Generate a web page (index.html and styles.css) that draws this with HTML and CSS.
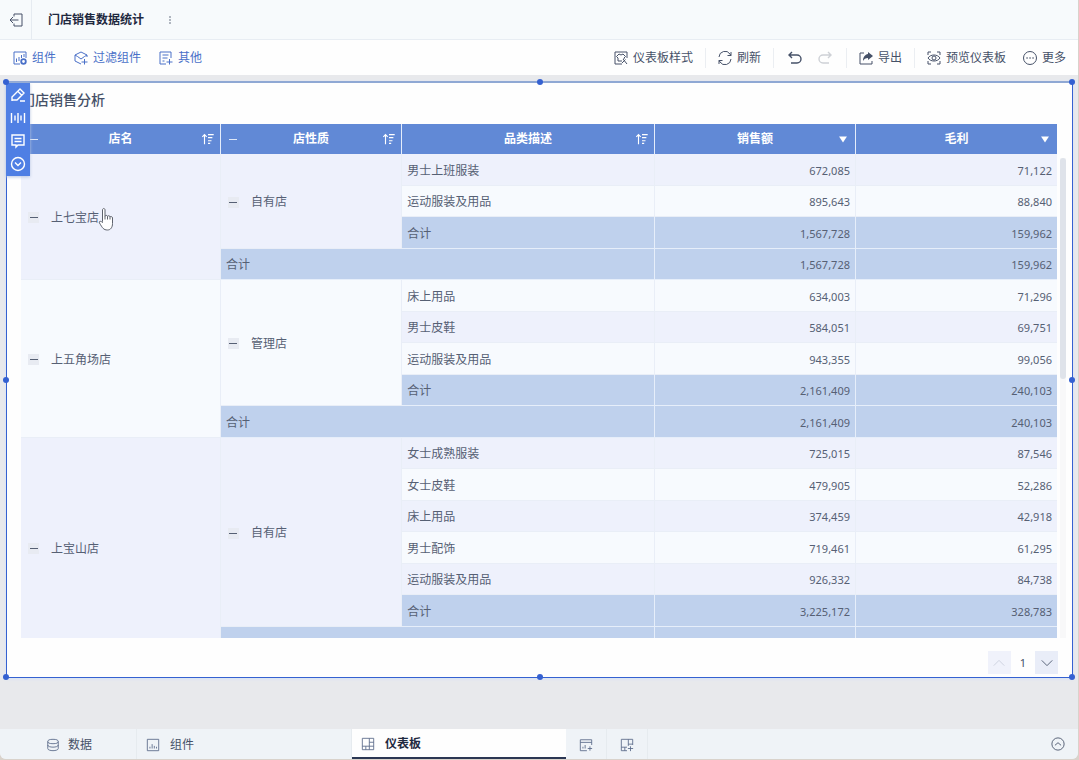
FILE: index.html
```html
<!DOCTYPE html>
<html lang="zh-CN">
<head>
    <meta charset="UTF-8">
    <meta name="viewport" content="width=device-width, initial-scale=1.0">
    <title>门店销售数据统计</title>
    <link rel="stylesheet" href="styles.css">
</head>
<body>
<div class="app">
    <header class="titlebar">
        <button class="icon-button exit-button" aria-label="退出">
            <svg class="icon" viewBox="1 1 14 14"><path d="M6 4.500V2h8v12H6v-2.500M10.500 8H2M5 5L2 8l3 3"/></svg>
        </button>
        <h1 class="page-title">门店销售数据统计</h1>
        <button class="icon-button" aria-label="更多操作">
            <svg class="icon solid" viewBox="0 0 16 16"><circle cx="8" cy="4" r="1"/><circle cx="8" cy="8" r="1"/><circle cx="8" cy="12" r="1"/></svg>
        </button>
    </header>

    <nav class="toolbar">
        <div class="tools tools-add">
            <button class="tool">
                <svg class="icon" viewBox="1 1 14 14"><path d="M8 14H2V2h12v6M4.500 12V8.500M7 11V7M9.500 8V5M12 7V4"/><circle class="thick" cx="11.500" cy="11.500" r="2.300"/></svg>
                组件
            </button>
            <button class="tool">
                <svg class="icon" viewBox="1 1 14 14"><path d="M14 7V5L8 2 2 5v6l6 3M2 5l2.500 1.500M14 5l-2.500 1.500M4.500 6.500L8 9l3.500-2.500M11.500 9v5.500M8.500 12h6"/></svg>
                过滤组件
            </button>
            <button class="tool">
                <svg class="icon" viewBox="1 1 14 14"><path d="M13 8V2H2v12h6M4.500 5h6M4.500 8h5M4.500 11h2M11.500 9v5.500M8.500 12h6"/></svg>
                其他
            </button>
        </div>
        <div class="tools tools-edit">
            <button class="tool">
                <svg class="icon" viewBox="1 1 14 14"><path d="M14 8V2H2v12h7M6 4l2 1 2-1 2.500 2.500L11 8v1M6 4L3.500 6.500 5 8v3h4M10 9l4 5M12.500 9.500L9 13"/></svg>
                仪表板样式
            </button>
            <span class="divider"></span>
            <button class="tool">
                <svg class="icon" viewBox="1 1 14 14"><path d="M2 7a6 6 0 0 1 11-3l1 1.500M14 2v3.500h-3.500M14 9a6 6 0 0 1-11 3l-1-1.500M2 14v-3.500h3.500"/></svg>
                刷新
            </button>
            <span class="divider"></span>
            <button class="icon-button" aria-label="撤销">
                <svg class="icon bold" viewBox="0 0 16 16"><path d="M5 2L2 5l3 3M2 5h8a4 4 0 0 1 0 8H4"/></svg>
            </button>
            <button class="icon-button redo" aria-label="重做" disabled>
                <svg class="icon bold" viewBox="0 0 16 16"><path d="M11 2l3 3-3 3M14 5H6a4 4 0 0 0 0 8h6"/></svg>
            </button>
            <span class="divider"></span>
            <button class="tool">
                <svg class="icon" viewBox="1 1 14 14"><path d="M6 3H2v11h12v-3"/><path class="fill" d="M10 2l5 4-5 4V8C7.500 8 6 9 5 11c0-4 2-6.500 5-7z"/></svg>
                导出
            </button>
            <span class="divider"></span>
            <button class="tool">
                <svg class="icon" viewBox="1 1 14 14"><path d="M2 5V2h3M11 2h3v3M14 11v3h-3M5 14H2v-3M2 8c2.500-4 9.500-4 12 0-2.500 4-9.500 4-12 0z"/><circle cx="8" cy="8" r="2"/></svg>
                预览仪表板
            </button>
            <button class="tool tool-more">
                <svg class="icon" viewBox="1 1 14 14"><circle cx="8" cy="8" r="6.500"/><path class="dots" d="M5 8h.1M8 8h.1M11 8h.1"/></svg>
                更多
            </button>
        </div>
    </nav>

    <main class="canvas">
        <section class="widget">
            <span class="handle top left"></span>
            <span class="handle top center"></span>
            <span class="handle top right"></span>
            <span class="handle middle left"></span>
            <span class="handle middle right"></span>
            <span class="handle bottom left"></span>
            <span class="handle bottom center"></span>
            <span class="handle bottom right"></span>

            <div class="widget-tools">
                <button aria-label="编辑"><svg class="icon" viewBox="0 0 16 16"><path d="M2 14v-4L10 2l4 4-7 7H2M8 4.500L11.500 8M10 14h5"/></svg></button>
                <button aria-label="筛选"><svg class="icon" viewBox="0 0 16 16"><path d="M1.500 3v10M14.500 3v10M5 5.500v5M8 3v10M11 5.500v5"/></svg></button>
                <button aria-label="备注"><svg class="icon" viewBox="0 0 16 16"><path d="M2 2h12v10H8l-2 2v-2H2zM4.500 5.500h7M4.500 8.500h7"/></svg></button>
                <button aria-label="展开"><svg class="icon" viewBox="0 0 16 16"><circle cx="8" cy="8" r="6.500"/><path d="M5 6.500l3 3 3-3"/></svg></button>
            </div>

            <h2 class="widget-title">门店销售分析</h2>

            <div class="table-area">
                <div class="table-clip">
                    <table class="report">
                        <colgroup>
                            <col class="col-store"><col class="col-type"><col class="col-category"><col class="col-amount"><col class="col-amount">
                        </colgroup>
                        <thead>
                        <tr>
                            <th><div class="head"><button class="fold" aria-label="折叠店名"></button><span>店名</span><button class="sort" aria-label="排序"><svg class="icon" viewBox="0 0 16 16"><path d="M4 14V3M1.500 5.500L4 3l2.500 2.500M8 3h6.500M8 6.500h5M8 10h4M8 13h2.500"/></svg></button></div></th>
                            <th><div class="head"><button class="fold" aria-label="折叠店性质"></button><span>店性质</span><button class="sort" aria-label="排序"><svg class="icon" viewBox="0 0 16 16"><path d="M4 14V3M1.500 5.500L4 3l2.500 2.500M8 3h6.500M8 6.500h5M8 10h4M8 13h2.500"/></svg></button></div></th>
                            <th><div class="head"><span>品类描述</span><button class="sort" aria-label="排序"><svg class="icon" viewBox="0 0 16 16"><path d="M4 14V3M1.500 5.500L4 3l2.500 2.500M8 3h6.500M8 6.500h5M8 10h4M8 13h2.500"/></svg></button></div></th>
                            <th><div class="head"><span>销售额</span><button class="sort" aria-label="排序"><svg class="icon solid" viewBox="0 0 16 16"><path d="M3.500 5h9L8 12z"/></svg></button></div></th>
                            <th><div class="head"><span>毛利</span><button class="sort" aria-label="排序"><svg class="icon solid" viewBox="0 0 16 16"><path d="M3.500 5h9L8 12z"/></svg></button></div></th>
                        </tr>
                        </thead>
                        <tbody>
                        <tr class="tint"><td rowspan="4" class="tint"><div class="group"><button class="fold" aria-label="折叠"></button>上七宝店</div></td><td rowspan="3" class="tint"><div class="group"><button class="fold" aria-label="折叠"></button>自有店</div></td><td>男士上班服装</td><td class="num">672,085</td><td class="num">71,122</td></tr>
                        <tr><td>运动服装及用品</td><td class="num">895,643</td><td class="num">88,840</td></tr>
                        <tr class="total"><td>合计</td><td class="num">1,567,728</td><td class="num">159,962</td></tr>
                        <tr class="total"><td colspan="2">合计</td><td class="num">1,567,728</td><td class="num">159,962</td></tr>

                        <tr><td rowspan="5"><div class="group"><button class="fold" aria-label="折叠"></button>上五角场店</div></td><td rowspan="4"><div class="group"><button class="fold" aria-label="折叠"></button>管理店</div></td><td>床上用品</td><td class="num">634,003</td><td class="num">71,296</td></tr>
                        <tr class="tint"><td>男士皮鞋</td><td class="num">584,051</td><td class="num">69,751</td></tr>
                        <tr><td>运动服装及用品</td><td class="num">943,355</td><td class="num">99,056</td></tr>
                        <tr class="total"><td>合计</td><td class="num">2,161,409</td><td class="num">240,103</td></tr>
                        <tr class="total"><td colspan="2">合计</td><td class="num">2,161,409</td><td class="num">240,103</td></tr>

                        <tr class="tint"><td rowspan="7" class="tint"><div class="group"><button class="fold" aria-label="折叠"></button>上宝山店</div></td><td rowspan="6" class="tint"><div class="group"><button class="fold" aria-label="折叠"></button>自有店</div></td><td>女士成熟服装</td><td class="num">725,015</td><td class="num">87,546</td></tr>
                        <tr><td>女士皮鞋</td><td class="num">479,905</td><td class="num">52,286</td></tr>
                        <tr class="tint"><td>床上用品</td><td class="num">374,459</td><td class="num">42,918</td></tr>
                        <tr><td>男士配饰</td><td class="num">719,461</td><td class="num">61,295</td></tr>
                        <tr class="tint"><td>运动服装及用品</td><td class="num">926,332</td><td class="num">84,738</td></tr>
                        <tr class="total"><td>合计</td><td class="num">3,225,172</td><td class="num">328,783</td></tr>
                        <tr class="total"><td colspan="2"></td><td></td><td></td></tr>
                        </tbody>
                    </table>
                </div>
                <div class="scroll-track"><div class="scroll-thumb"></div></div>
            </div>

            <div class="pager">
                <button aria-label="上一页" disabled><svg class="icon" viewBox="0 0 16 16"><path d="M2 11l6-6 6 6"/></svg></button>
                <span>1</span>
                <button aria-label="下一页"><svg class="icon" viewBox="0 0 16 16"><path d="M2 5l6 6 6-6"/></svg></button>
            </div>
        </section>

        <svg class="cursor" viewBox="0 0 16 24"><path d="M4.500 14V2.500c0-2 2.500-2 2.500 0V9c0-1.500 2.500-1.500 2.500 0 .5-1.200 2.500-1 2.500.500.500-1 2.500-.5 2.500 1V16c0 4-2 6.500-5 6.500-4 0-5-2-8-7-.8-1.700 1-2.500 3-.5zM7 9v3M9.500 9v3M12 9.500V12"/></svg>
    </main>

    <footer class="tabs">
        <button class="tab tab-data">
            <svg class="icon" viewBox="0 0 16 16"><ellipse cx="8" cy="4" rx="6" ry="2.500"/><path d="M2 4v8c0 3.300 12 3.300 12 0V4M2 8c0 3.300 12 3.300 12 0"/></svg>
            数据
        </button>
        <button class="tab tab-chart">
            <svg class="icon" viewBox="0 0 16 16"><path d="M1.500 1.500h13v13h-13zM4.500 12v-2M7 12V7M9.500 12V9M12 12v-2"/></svg>
            组件
        </button>
        <button class="tab tab-active">
            <svg class="icon" viewBox="0 0 16 16"><path d="M1.500 1.500h13v13h-13zM9.500 1.500v13M1.500 10.500h8M9.500 6h5M9.500 10.500h5M5.500 10.500v4"/></svg>
            仪表板
        </button>
        <button class="tab tab-small" aria-label="新建组件">
            <svg class="icon" viewBox="0 0 16 16"><path d="M14.500 8V2h-13v12.500H9M1.500 5h13M4.500 12v-2M7 12V8M12.500 9.500v5M10 12h5"/></svg>
        </button>
        <button class="tab tab-small" aria-label="新建仪表板">
            <svg class="icon" viewBox="0 0 16 16"><path d="M14.500 8V1.500h-13v13H8M9.500 1.500V9M1.500 10.500H8M9.500 7h5M5.500 10.500v4M12 9.500v5.500M9 12h6"/></svg>
        </button>
        <button class="icon-button collapse" aria-label="收起">
            <svg class="icon" viewBox="0 0 16 16"><circle cx="8" cy="8" r="7"/><path d="M4.500 9.500L8 6.500l3.500 3"/></svg>
        </button>
    </footer>
</div>
</body>
</html>
```

FILE: styles.css
```css
:root {
    --ink: #465168;
    --cell: #566074;
    --dark: #1f2940;
    --blue: #4a70c8;
    --select: #3561d1;
    --head: #6189d6;
    --total: #bfd1ed;
    --tint: #eef1fc;
    --plain: #f7fafe;
    --bar: #eff3f7;
}

* {
    box-sizing: border-box;
}

body {
    margin: 0;
    padding: 0 1px 1px 0;
    min-height: 100vh;
    display: flex;
    background: #d9d2cb;
    color: var(--ink);
    font-family: "Noto Sans", "Noto Sans CJK SC", sans-serif;
    font-size: 12px;
    line-height: 16px;
}

button {
    padding: 0;
    border: none;
    background: none;
    color: inherit;
    font: inherit;
    cursor: pointer;
}

h1,
h2 {
    margin: 0;
}

.icon {
    display: block;
    flex: none;
    width: 16px;
    height: 16px;
    overflow: visible;
    fill: none;
    stroke: currentColor;
    stroke-width: 1;
}

.icon.bold {
    stroke-width: 1.4;
}

.icon.solid,
.icon .fill {
    fill: currentColor;
    stroke: none;
}

.icon .thick {
    stroke-width: 1.8;
}

.icon .dots {
    stroke-width: 1.5;
    stroke-linecap: round;
}

.app {
    flex: 1;
    display: flex;
    flex-direction: column;
    background: #e8e9ec;
    border-radius: 0 0 6px 6px;
    overflow: hidden;
}

/* top bars */
.titlebar {
    display: flex;
    align-items: center;
    height: 40px;
    background: #f7fafc;
    border-bottom: 1px solid #e8edf3;
}

.icon-button {
    display: flex;
    align-items: center;
    justify-content: center;
    width: 32px;
    height: 24px;
}

.exit-button {
    height: 100%;
    border-right: 1px solid #e6ebf1;
}

.page-title {
    margin: 0 10px 0 16px;
    color: var(--dark);
    font-size: 12px;
    font-weight: 700;
}

.titlebar .solid {
    width: 12px;
}

.toolbar {
    display: flex;
    align-items: center;
    justify-content: space-between;
    height: 35px;
    padding: 0 12px 0 13px;
    background: #fefefe;
}

.tools {
    display: flex;
    align-items: center;
}

.tools-add {
    gap: 18px;
    color: var(--blue);
}

.tool {
    display: flex;
    align-items: center;
    gap: 5px;
    white-space: nowrap;
}

.tools-edit {
    gap: 12px;
}

.tools-edit .icon-button {
    width: 18px;
}

.tools-edit .redo {
    color: #ced1d6;
}

.tool-more {
    margin-left: 5px;
}

.divider {
    width: 1px;
    height: 20px;
    background: #ebeef2;
}

/* canvas */
.canvas {
    position: relative;
    flex: 1;
    padding: 6px 5px 6px 6px;
}

.widget {
    position: relative;
    padding: 8px 6px 3px 14px;
    background: #fefefe;
    border: 1px solid var(--select);
    border-top: 2px solid #8fa8d4;
    box-shadow: 0 1px 3px #d5e2f7;
}

.widget-title {
    padding-bottom: 15px;
    font-size: 14px;
    font-weight: 500;
    line-height: 18px;
}

.handle {
    position: absolute;
    z-index: 3;
    width: 6px;
    height: 6px;
    border-radius: 50%;
    background: var(--select);
}

.handle.top { top: -4px; }
.handle.middle { top: calc(50% - 3px); }
.handle.bottom { bottom: -3px; }
.handle.left { left: -4px; }
.handle.center { left: calc(50% - 3px); }
.handle.right { right: -3px; }

.widget-tools {
    position: absolute;
    z-index: 2;
    top: 0;
    left: -1px;
    display: flex;
    flex-direction: column;
    width: 24px;
    padding-bottom: 1px;
    background: #4f7fe4;
    color: #fff;
    box-shadow: 0 1px 3px #b8c6e2;
}

.widget-tools button {
    display: flex;
    align-items: center;
    justify-content: center;
    height: 23px;
}

.widget-tools .icon {
    stroke-width: 1.4;
}

/* report table */
.table-area {
    display: flex;
}

.table-clip {
    flex: 1;
    height: 514px;
    overflow: hidden;
}

.report {
    width: 100%;
    table-layout: fixed;
    border-collapse: separate;
    border-spacing: 0;
}

.col-store { width: 19.3%; }
.col-type { width: 17.5%; }
.col-category { width: 24.4%; }
.col-amount { width: 19.4%; }

.report th {
    height: 30px;
    padding: 0;
    background: var(--head);
    border-right: 1px solid #e5edfb;
    color: #fff;
    font-weight: 700;
}

.report td {
    height: 31px;
    padding: 2px 5px 0;
    background: var(--plain);
    border-right: 1px solid #e9eef7;
    border-bottom: 1px solid #e9eef7;
    color: var(--cell);
}

.report tr > :last-child {
    border-right: none;
}

.report tbody tr:nth-child(odd) td {
    height: 32px;
}

.report .tint td,
.report td.tint {
    background: var(--tint);
}

.report .total td {
    background: var(--total);
    border-color: #e6eefa;
}

.report .num {
    font-size: 11px;
    text-align: right;
}

.head {
    position: relative;
    display: flex;
    align-items: center;
    justify-content: center;
}

.head .fold,
.head .sort {
    position: absolute;
}

.head .fold {
    left: 7px;
    background: none;
    color: #dfe8f8;
}

.head .sort {
    right: 5px;
}

.head .icon {
    width: 14px;
    height: 14px;
    stroke-width: 1.3;
}

.fold {
    display: flex;
    align-items: center;
    justify-content: center;
    width: 11px;
    height: 11px;
    background: #e8ebf2;
}

.fold::before {
    content: "";
    width: 8px;
    height: 1px;
    background: currentColor;
}

.group {
    display: flex;
    align-items: center;
    gap: 12px;
    padding-left: 2px;
}

.scroll-track {
    width: 6px;
    margin: 34px 0 0 3px;
    background: #f8f8f9;
}

.scroll-thumb {
    height: 46%;
    border-radius: 3px;
    background: #dfe3ea;
}

.pager {
    display: flex;
    align-items: center;
    justify-content: flex-end;
    gap: 9px;
    padding: 13px 8px 0 0;
    font-size: 11px;
}

.pager button {
    display: flex;
    align-items: center;
    justify-content: center;
    width: 23px;
    height: 23px;
    background: #e9edf8;
}

.pager button:disabled {
    background: #f0f2fb;
    color: #c9cedb;
}

.pager .icon {
    width: 14px;
    height: 14px;
}

.cursor {
    position: absolute;
    z-index: 4;
    top: 132px;
    left: 98px;
    width: 16px;
    height: 25px;
    fill: #fff;
    stroke: #5d626c;
    stroke-width: 1;
}

/* bottom tabs */
.tabs {
    display: flex;
    height: 30px;
    background: var(--bar);
}

.tab {
    display: flex;
    align-items: center;
    gap: 8px;
    padding-top: 1px;
    border-right: 1px solid #e6ebef;
}

.tab .icon,
.exit-button .icon,
.tool .icon,
.collapse .icon {
    width: 14px;
    height: 14px;
}

.tab .icon {
    color: #5c6b8a;
}

.tab-data {
    width: 137px;
    padding-left: 46px;
}

.tab-chart {
    width: 215px;
    padding-left: 9px;
    gap: 10px;
}

.tab-active {
    width: 214px;
    padding-left: 9px;
    gap: 10px;
    background: #fefefe;
    border-right: none;
    border-bottom: 2px solid #2b3753;
    color: var(--dark);
    font-weight: 700;
}

.tab-small {
    width: 41px;
    justify-content: center;
}

.collapse {
    height: 100%;
    margin-left: auto;
    margin-right: 4px;
}
```
